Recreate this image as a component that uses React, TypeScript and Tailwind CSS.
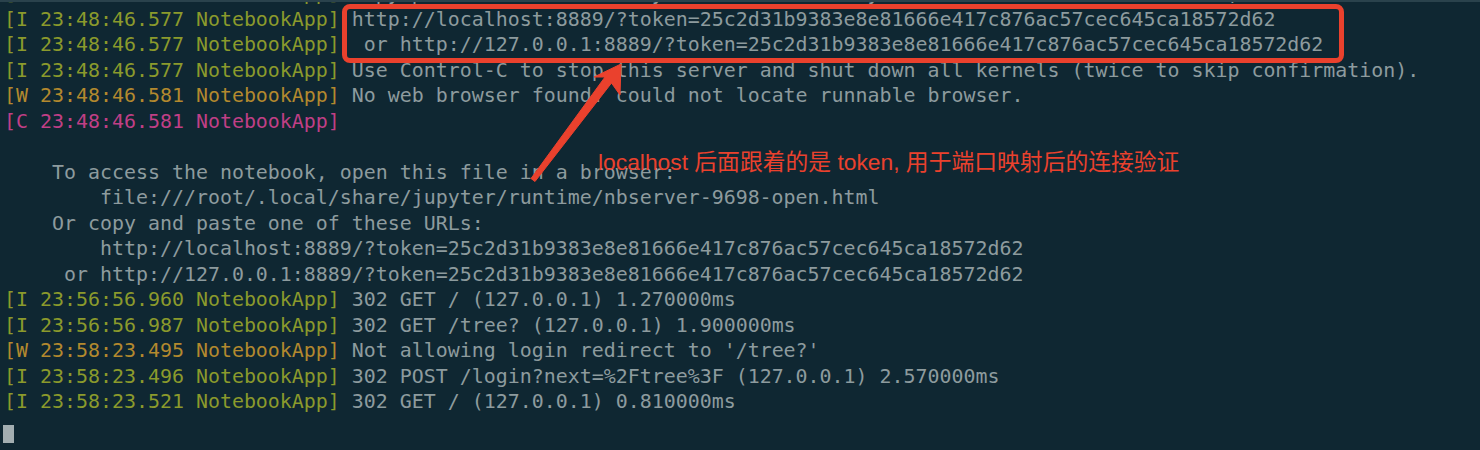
import React from 'react';

type Seg = { text: string; tone: 'info' | 'warn' | 'crit' | 'plain' };

const toneClass: Record<Seg['tone'], string> = {
  info: 'text-[#8b9a2c]',
  warn: 'text-[#b3892e]',
  crit: 'text-[#c03f86]',
  plain: 'text-[#8d9b9e]',
};

const lines: Seg[][] = [
  [
    { text: '[I 23:48:46.577 NotebookApp]', tone: 'info' },
    { text: ' Copy/paste this URL into your browser when you connect for the first time,', tone: 'plain' },
  ],
  [
    { text: '[I 23:48:46.577 NotebookApp]', tone: 'info' },
    { text: ' http://localhost:8889/?token=25c2d31b9383e8e81666e417c876ac57cec645ca18572d62', tone: 'plain' },
  ],
  [
    { text: '[I 23:48:46.577 NotebookApp]', tone: 'info' },
    { text: '  or http://127.0.0.1:8889/?token=25c2d31b9383e8e81666e417c876ac57cec645ca18572d62', tone: 'plain' },
  ],
  [
    { text: '[I 23:48:46.577 NotebookApp]', tone: 'info' },
    { text: ' Use Control-C to stop this server and shut down all kernels (twice to skip confirmation).', tone: 'plain' },
  ],
  [
    { text: '[W 23:48:46.581 NotebookApp]', tone: 'warn' },
    { text: ' No web browser found: could not locate runnable browser.', tone: 'plain' },
  ],
  [{ text: '[C 23:48:46.581 NotebookApp]', tone: 'crit' }],
  [{ text: ' ', tone: 'plain' }],
  [{ text: '    To access the notebook, open this file in a browser:', tone: 'plain' }],
  [{ text: '        file:///root/.local/share/jupyter/runtime/nbserver-9698-open.html', tone: 'plain' }],
  [{ text: '    Or copy and paste one of these URLs:', tone: 'plain' }],
  [{ text: '        http://localhost:8889/?token=25c2d31b9383e8e81666e417c876ac57cec645ca18572d62', tone: 'plain' }],
  [{ text: '     or http://127.0.0.1:8889/?token=25c2d31b9383e8e81666e417c876ac57cec645ca18572d62', tone: 'plain' }],
  [
    { text: '[I 23:56:56.960 NotebookApp]', tone: 'info' },
    { text: ' 302 GET / (127.0.0.1) 1.270000ms', tone: 'plain' },
  ],
  [
    { text: '[I 23:56:56.987 NotebookApp]', tone: 'info' },
    { text: ' 302 GET /tree? (127.0.0.1) 1.900000ms', tone: 'plain' },
  ],
  [
    { text: '[W 23:58:23.495 NotebookApp]', tone: 'warn' },
    { text: " Not allowing login redirect to '/tree?'", tone: 'plain' },
  ],
  [
    { text: '[I 23:58:23.496 NotebookApp]', tone: 'info' },
    { text: ' 302 POST /login?next=%2Ftree%3F (127.0.0.1) 2.570000ms', tone: 'plain' },
  ],
  [
    { text: '[I 23:58:23.521 NotebookApp]', tone: 'info' },
    { text: ' 302 GET / (127.0.0.1) 0.810000ms', tone: 'plain' },
  ],
];

const App = () => {
  return (
    <div className="relative w-[1480px] h-[450px] overflow-hidden bg-[#0f2732] border-t-2 border-[#2a424c]">
      {/* Terminal output */}
      <div className="-mt-[21px] pl-[4px] font-['DejaVu_Sans_Mono','Liberation_Mono',monospace] text-[19.93px] leading-[25.5px] whitespace-pre">
        {lines.map((line, i) => (
          <div key={i}>
            {line.map((seg, j) => (
              <span key={j} className={toneClass[seg.tone]}>
                {seg.text}
              </span>
            ))}
          </div>
        ))}
        <div className="h-[25.5px] pt-[10px]">
          <div className="w-[11px] h-[18px] bg-[#a3aeb1] -ml-[1px]"></div>
        </div>
      </div>

      {/* Highlight box */}
      <div className="absolute left-[342px] top-[2px] w-[1002px] h-[59px] border-[5px] border-[#ea412d] rounded-[8px]"></div>

      {/* Arrow */}
      <svg className="absolute left-0 top-0" width="1480" height="450" viewBox="0 0 1480 450">
        <polygon
          points="621,62 620,93 611.5,81 535,179.5 531,176.5 605,75 594,75"
          fill="#ea412d"
          stroke="#ea412d"
          strokeWidth="1"
          strokeLinejoin="round"
        />
      </svg>

      {/* Annotation */}
      <div className="absolute left-[598px] top-[145px] text-[22.8px] leading-[30px] text-[#ea412d] font-['Liberation_Sans','Noto_Sans_CJK_SC',sans-serif] whitespace-nowrap">
        localhost 后面跟着的是 token, 用于端口映射后的连接验证
      </div>
    </div>
  );
};

export default App;
